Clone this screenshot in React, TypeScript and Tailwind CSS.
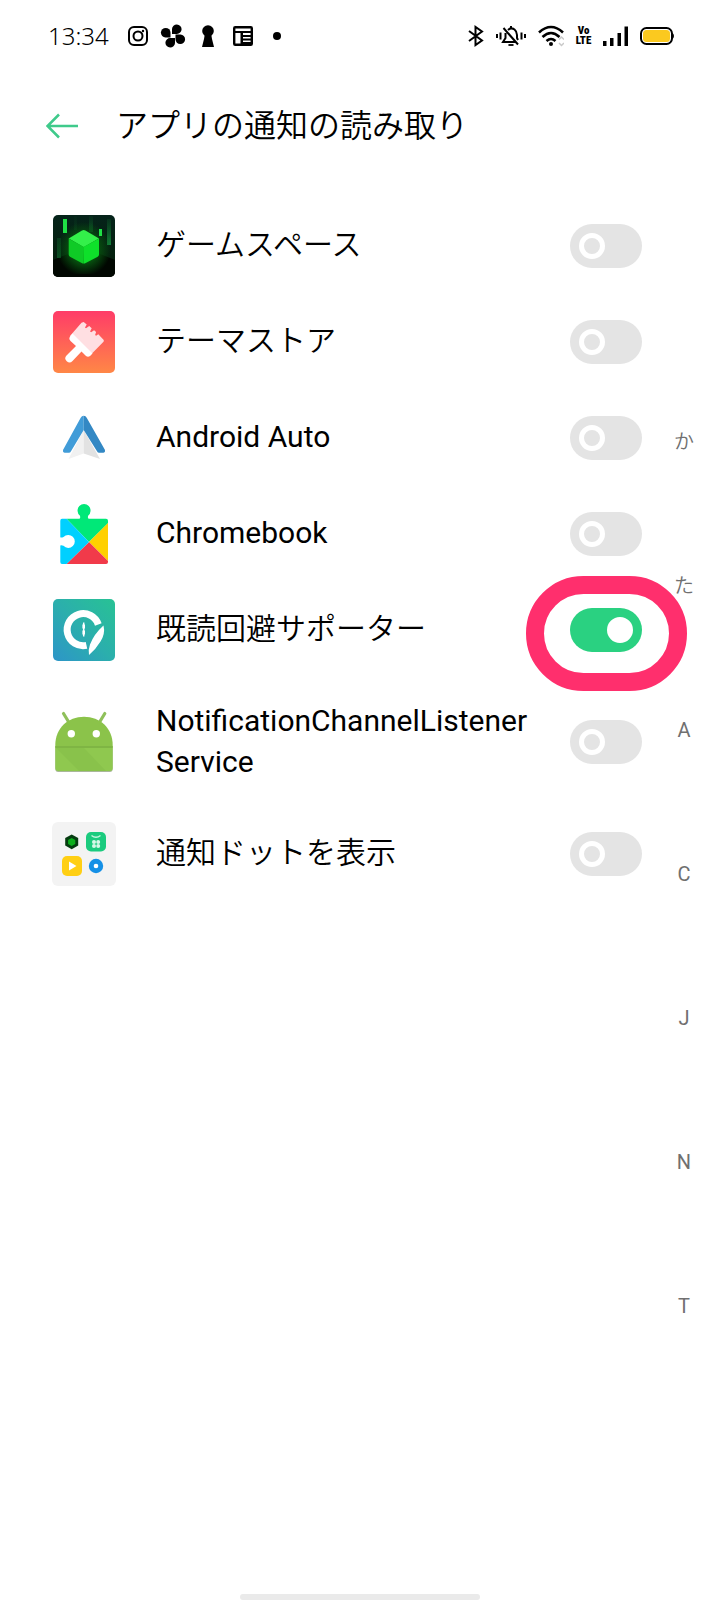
import { useState } from 'react';
import type { ReactNode } from 'react';

interface AppEntry {
    id: string;
    name: string;
    icon: ReactNode;
    enabled: boolean;
    tall?: boolean;
}

function GameSpaceIcon() {
    return (
        <svg viewBox="0 0 64 64" className="size-16 shrink-0" aria-hidden="true">
            <defs>
                <radialGradient id="gs-glow" cx="0.5" cy="0.52" r="0.52">
                    <stop offset="0" stopColor="#0fb81d" />
                    <stop offset="0.5" stopColor="#07500f" />
                    <stop offset="1" stopColor="#07500f" stopOpacity="0" />
                </radialGradient>
                <linearGradient id="gs-bg" x1="0" y1="0" x2="0" y2="1">
                    <stop offset="0" stopColor="#05231a" />
                    <stop offset="0.7" stopColor="#04200d" />
                    <stop offset="1" stopColor="#000300" />
                </linearGradient>
                <linearGradient id="gs-bar" x1="0" y1="0" x2="0" y2="1">
                    <stop offset="0" stopColor="#0f6a2c" stopOpacity="0.1" />
                    <stop offset="1" stopColor="#13803a" />
                </linearGradient>
            </defs>
            <rect x="1" y="1" width="62" height="62" rx="5" fill="url(#gs-bg)" />
            <path d="M1 46 16 40h32l15 6v12a5 5 0 0 1-5 5H6a5 5 0 0 1-5-5z" fill="#010701" />
            <path d="M37 2h4v16h-4zM55 5h4v26h-4z" fill="url(#gs-bar)" />
            <path d="M5 24h4v20H5zM22 2h3v14h-3z" fill="url(#gs-bar)" opacity="0.5" />
            <rect x="6" y="8" width="52" height="52" fill="url(#gs-glow)" />
            <path d="M11 5h4v14h-4zM47 15h3v7h-3z" fill="#1fe045" />
            <path d="M30 16.500q1.700-.8 3.400 0L47 24.500 31.700 33 16.700 24.500z" fill="#33f04a" />
            <path d="M16.700 24.500 31.700 33v16.500q-1 0-2-.6L18 42.800q-1.300-.8-1.300-2.300z" fill="#0fca26" />
            <path d="M47 24.500 31.700 33v16.500q1 0 2-.6l12-6.100q1.300-.8 1.300-2.300z" fill="#0ee02a" />
        </svg>
    );
}

function ThemeStoreIcon() {
    return (
        <svg viewBox="0 0 64 64" className="size-16 shrink-0" aria-hidden="true">
            <defs>
                <linearGradient id="theme-bg" x1="0" y1="0" x2="0" y2="1">
                    <stop offset="0" stopColor="#ff3c68" />
                    <stop offset="1" stopColor="#ff8746" />
                </linearGradient>
            </defs>
            <rect x="1" y="1" width="62" height="62" rx="5" fill="url(#theme-bg)" />
            <path d="m29.500 12.800 2.200-.8 3 2.500-1.700 3 1 .8 3.200-2.300 2.500 2.200-1.600 3.300 1 .8 3-2 2 1.700-1 2.900 1 .8 2.200-1.500 5.200 5.500q.8 1 0 2L38 45.500 18 26z" fill="#ffdfe2" />
            <path d="M20.500 23.500 40.500 43.500 38 46q-2 1.500-4 0l-4.500-4.500-9 9.500a4 4 0 0 1-6-5.500l9.500-9.500-5.500-5q-2-2-.8-4z" fill="#fff" />
        </svg>
    );
}

function AndroidAutoIcon() {
    return (
        <svg viewBox="0 0 64 64" className="size-16 shrink-0" aria-hidden="true">
            <path d="M31.700 24 16.500 53l15.200-5.500z" fill="#f1f1f1" />
            <path d="M31.700 24 48 53l-16.300-5.500z" fill="#e2e2e2" />
            <path d="M31.700 9.700q-2 0-3 2L11 44q-.5 2.500 1.500 2.700h4.300q1.500 0 2.200-1.500L31.700 24z" fill="#419cd8" />
            <path d="M31.700 9.700q2 0 3 2L53 44q.5 2.500-1.500 2.700h-4.300q-1.500 0-2.200-1.500L31.700 24z" fill="#3388c4" />
        </svg>
    );
}

function PlayServicesIcon() {
    return (
        <svg viewBox="0 0 64 64" className="size-16 shrink-0" aria-hidden="true">
            <path d="M14.500 16.700H27.500q1.300-1 .3-3.200a6.500 6.500 0 1 1 8.500 0q-1 2.200.3 3.200H54q2 0 2 2v2.500L37 40z" fill="#00e878" />
            <path d="M56 21v38L37 40z" fill="#ffd000" />
            <path d="m37 40 19 19v1q0 2-2 2H14.500z" fill="#f13a4a" />
            <path d="M14.500 16.700H10q-1.700 0-1.700 2v16.500q1 .8 3.200-.2a6.500 6.500 0 1 1 0 8.800q-2.200-1-3.200-.2V60q0 2 1.700 2h4.500L37 40z" fill="#00d0ff" />
        </svg>
    );
}

function SupporterIcon() {
    return (
        <svg viewBox="0 0 64 64" className="size-16 shrink-0" aria-hidden="true">
            <defs>
                <linearGradient id="sup-bg" x1="0" y1="1" x2="1" y2="0">
                    <stop offset="0" stopColor="#2d95c8" />
                    <stop offset="0.5" stopColor="#2bafac" />
                    <stop offset="1" stopColor="#28c294" />
                </linearGradient>
            </defs>
            <rect x="1" y="1" width="62" height="62" rx="5" fill="url(#sup-bg)" />
            <path d="M46.300 26.500A16 16 0 1 0 34.500 47.300" fill="none" stroke="#fff" strokeWidth="7" />
            <path d="M51.500 27.500q2 8-3 16-4.500 7.500-11.500 13.500-1-5 1-10.500 4-10.500 13.500-19z" fill="#fff" />
            <path d="M31.700 24.500v14" stroke="#fff" strokeWidth="1.500" />
            <path d="M31.700 26.500v4M31.700 32.500v4" stroke="#fff" strokeWidth="2.600" />
        </svg>
    );
}

function AndroidIcon() {
    return (
        <svg viewBox="0 0 64 64" className="size-16 shrink-0" aria-hidden="true">
            <path d="m11.500 3.500 7 11.500M52.800 3.500l-7 11.500" stroke="#8fc05a" strokeWidth="3.200" strokeLinecap="round" />
            <path d="M3.300 37v-2C3.300 18 16 6.700 32 6.700S60.700 18 60.700 35v2z" fill="#8bc34a" />
            <path d="M3.300 38h57.400v21q0 3-3 3H6.300q-3 0-3-3z" fill="#a9b79a" />
            <path d="M3.300 37h57.400v21q0 3-3 3H6.300q-3 0-3-3z" fill="#8fc84f" />
            <path d="M4 38h28l22 23H27z" fill="#84bc47" opacity="0.5" />
            <path d="M3.300 36h57.400v2H3.300z" fill="#7fb544" />
            <circle cx="19.300" cy="23.700" r="3.700" fill="#fff" />
            <circle cx="44.300" cy="23.700" r="3.700" fill="#fff" />
        </svg>
    );
}

function DotFolderIcon() {
    return (
        <svg viewBox="0 0 64 64" className="size-16 shrink-0" aria-hidden="true">
            <rect width="64" height="64" rx="6" fill="#f3f3f3" />
            <path d="m19.700 12.500 6.500 3.600v7.500l-6.500 3.600-6.500-3.600v-7.500z" fill="#053c10" />
            <path d="m19.700 16 3.600 2v4l-3.600 2-3.600-2v-4z" fill="#0cae1c" />
            <rect x="34" y="10" width="20" height="19.500" rx="5" fill="#1bcb7e" />
            <path d="M39.500 13.500q4.500 3.500 9 0" fill="none" stroke="#c6f5df" strokeWidth="1.500" />
            <g fill="#d6f8e8">
                <circle cx="42" cy="20" r="2" />
                <circle cx="46.200" cy="20" r="2" />
                <circle cx="42" cy="24" r="2" />
                <circle cx="46.200" cy="24" r="2" />
            </g>
            <rect x="10" y="34" width="20" height="20" rx="5" fill="#ffcf13" />
            <path d="m17 39.500 7.500 4.500-7.500 4.500z" fill="#fff" />
            <circle cx="44" cy="44" r="7.200" fill="#1590e6" />
            <circle cx="44" cy="44" r="2.300" fill="#fff" />
        </svg>
    );
}

const initialApps: AppEntry[] = [
    { id: 'game-space', name: 'ゲームスペース', icon: <GameSpaceIcon />, enabled: false },
    { id: 'theme-store', name: 'テーマストア', icon: <ThemeStoreIcon />, enabled: false },
    { id: 'android-auto', name: 'Android Auto', icon: <AndroidAutoIcon />, enabled: false },
    { id: 'chromebook', name: 'Chromebook', icon: <PlayServicesIcon />, enabled: false },
    { id: 'supporter', name: '既読回避サポーター', icon: <SupporterIcon />, enabled: true },
    { id: 'listener', name: 'NotificationChannelListenerService', icon: <AndroidIcon />, enabled: false, tall: true },
    { id: 'dots', name: '通知ドットを表示', icon: <DotFolderIcon />, enabled: false },
];

const indexLetters = ['か', 'た', 'A', 'C', 'J', 'N', 'T'];

// Japanese text is set a little lighter than Latin so both look even
function weightFor(text: string) {
    return /^[A-Za-z ]+$/.test(text) ? 'font-normal' : 'font-[350]';
}

function StatusBar() {
    return (
        <div className="flex h-[72px] items-center justify-between pl-12 pr-[46px]">
            <div className="flex items-center gap-[11px]">
                <span className="mr-[6px] font-['Noto_Sans'] text-2xl font-[350]">13:34</span>
                <svg viewBox="0 0 24 24" className="size-6" fill="none" stroke="#000" strokeWidth="2" aria-hidden="true">
                    <rect x="3" y="3" width="18" height="18" rx="5" />
                    <circle cx="12" cy="12" r="4.500" />
                    <circle cx="17" cy="7" r="1.200" fill="#000" stroke="none" />
                </svg>
                <svg viewBox="0 0 24 24" className="size-6 overflow-visible" aria-hidden="true">
                    <path d="M11 10V5a4.800 4.800 0 1 1 4.800 5z" />
                    <path d="M14.500 10.500h5a4.800 4.800 0 1 1-5 4.800z" />
                    <path d="M14 14v5a4.800 4.800 0 1 1-4.800-5z" />
                    <path d="M9.500 13.500h-5a4.800 4.800 0 1 1 5-4.800z" />
                </svg>
                <svg viewBox="0 0 24 24" className="size-6" aria-hidden="true">
                    <circle cx="12" cy="7" r="5.800" />
                    <path d="M9 9h6l1 6 2 8H6l2-8z" />
                </svg>
                <svg viewBox="0 0 24 24" className="size-6" aria-hidden="true">
                    <rect x="3.200" y="3.200" width="17.600" height="17.600" rx="1" fill="none" stroke="#000" strokeWidth="2.400" />
                    <path d="M4 7h16v2H4zM9.500 7h2.500v14H9.500zM11 11h9v2h-9zM11 14.500h9v2h-9zM11 18h9v2h-9z" />
                </svg>
                <svg viewBox="0 0 24 24" className="size-6" aria-hidden="true">
                    <circle cx="11" cy="12" r="4" />
                </svg>
            </div>
            <div className="flex items-center gap-3">
                <svg viewBox="0 0 16 22" className="h-[22px] w-4" fill="none" stroke="#000" strokeWidth="2" aria-hidden="true">
                    <path d="m1 6 13 9.500-6.500 4.500V2L14 6.500 1 16" />
                </svg>
                <svg viewBox="0 0 30 22" className="h-[22px] w-[30px]" fill="none" stroke="#000" strokeWidth="2" aria-hidden="true">
                    <path d="M1 9v4M4.500 7.500v7M25.500 7.500v7M29 9v4" />
                    <path d="M12 5q3-3 6.500-.5Q21 6.500 21 10v3l1 2M9.500 8v5L7 17h13M7.500 3 22 19.500M15 1v2" />
                    <path d="M12.500 20h5" strokeWidth="1.800" />
                </svg>
                <svg viewBox="0 0 26 22" className="h-[22px] w-[26px]" fill="none" stroke="#000" strokeWidth="2.600" aria-hidden="true">
                    <path d="M1 7.500q12-11 24 0M4.500 12q8.500-8 17 0M8.500 16q4.500-4 9 0" />
                    <circle cx="13" cy="19" r="2" fill="#000" stroke="none" />
                    <path d="m21 14.500 2.500-2.500 2.500 2.500M21 18l2.500 2.500L26 18" stroke="#c9c9c9" strokeWidth="1.500" />
                </svg>
                <div className="flex w-[15px] flex-col items-center font-['Roboto_Condensed','Roboto',sans-serif] text-[11px] leading-[10px] font-black">
                    <span>Vo</span>
                    <span>LTE</span>
                </div>
                <svg viewBox="0 0 25 22" className="h-[22px] w-[25px]" aria-hidden="true">
                    <path d="M0 16h3.500v5H0zM7 13h3.500v8H7zM14.500 8H18v13h-3.500zM21.500 1.500H25V21h-3.500z" />
                </svg>
                <svg viewBox="0 0 34 20" className="h-5 w-[34px]" aria-hidden="true">
                    <rect x="1" y="2" width="31" height="16" rx="5.500" fill="#fff" stroke="#000" strokeWidth="2" />
                    <rect x="3" y="4" width="27" height="12" rx="3.500" fill="#fbc91f" />
                    <path d="M32 7q2 .5 2 3t-2 3z" />
                </svg>
            </div>
        </div>
    );
}

function Toggle({ id, checked, onChange }: { id: string; checked: boolean; onChange: () => void }) {
    return (
        <input
            id={id}
            type="checkbox"
            role="switch"
            checked={checked}
            onChange={onChange}
            className="block h-11 w-[72px] cursor-pointer appearance-none rounded-full bg-[#e4e4e4] p-[9px] before:block before:size-[26px] before:rounded-full before:border-[5px] before:border-white checked:bg-[#2ad181] checked:before:ml-7 checked:before:bg-white"
        />
    );
}

export default function App() {
    const [apps, setApps] = useState(initialApps);

    const toggle = (id: string) => {
        setApps((prev) => prev.map((app) => (app.id === id ? { ...app, enabled: !app.enabled } : app)));
    };

    return (
        <div lang="ja" className="flex min-h-screen flex-col bg-white font-[Roboto,'Noto_Sans_CJK_JP',sans-serif] text-black">
            <StatusBar />

            <header className="flex h-[108px] items-center gap-[38px] pl-[46px]">
                <button type="button" aria-label="戻る">
                    <svg viewBox="0 0 32 26" className="h-[26px] w-8" fill="none" stroke="#3fca8b" strokeWidth="2.500" aria-hidden="true">
                        <path d="M32 13H1.500M13 1.500 1.500 13 13 24.500" />
                    </svg>
                </button>
                <h1 className="text-[32px] leading-10 font-[350]">アプリの通知の読み取り</h1>
            </header>

            <main className="flex flex-1 pt-[18px]">
                <ul className="min-w-0 flex-1 pl-[52px] pr-[6px]">
                    {apps.map((app) => (
                        <li key={app.id} className={`flex items-center gap-10 ${app.tall ? 'h-32' : 'h-24'}`}>
                            {app.icon}
                            <label
                                htmlFor={app.id}
                                className={`min-w-0 flex-1 text-[30px] leading-[41px] break-all ${weightFor(app.name)} ${app.tall ? 'pb-0.5' : 'pb-1'}`}
                            >
                                {app.name}
                            </label>
                            <div className="relative -ml-3 shrink-0">
                                <Toggle id={app.id} checked={app.enabled} onChange={() => toggle(app.id)} />
                                {app.id === 'supporter' && (
                                    <span className="pointer-events-none absolute -top-8 -right-[45px] -bottom-[39px] -left-11 rounded-full border-[18px] border-[#ff2f6d]" />
                                )}
                            </div>
                        </li>
                    ))}
                </ul>

                <nav aria-label="索引" className="w-[72px] pt-[172px]">
                    {indexLetters.map((letter) => (
                        <a
                            key={letter}
                            href={`#${letter}`}
                            className={`flex h-36 items-center justify-center text-xl text-[#707070] ${weightFor(letter)}`}
                        >
                            {letter}
                        </a>
                    ))}
                </nav>
            </main>

            <footer className="h-[6px] w-1/3 self-center rounded-full bg-[#eaeaea]" />
        </div>
    );
}
